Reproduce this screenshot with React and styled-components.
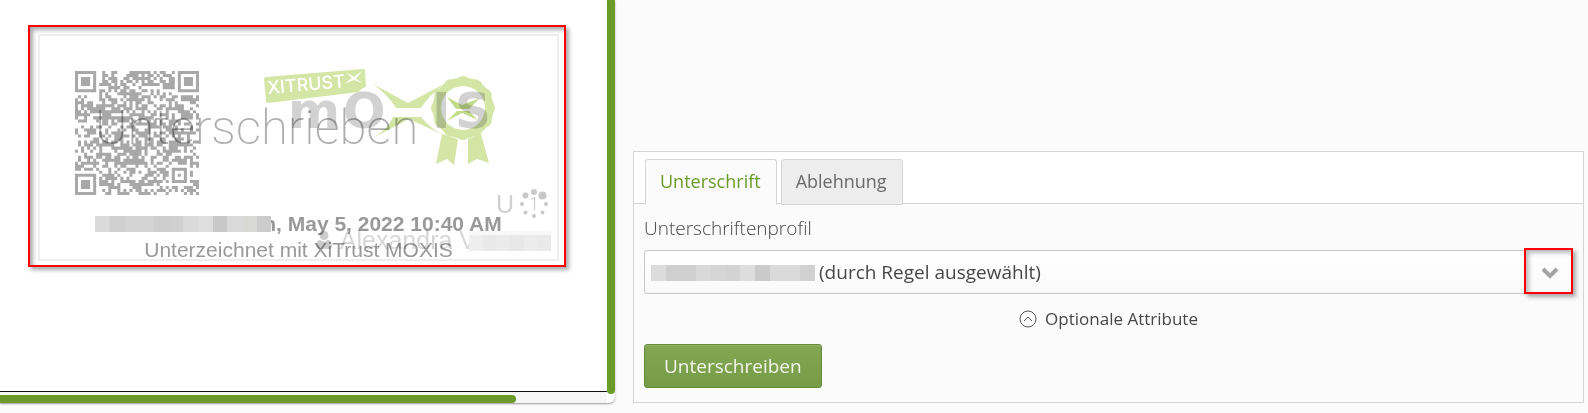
import { useState } from "react";
import styled, { createGlobalStyle } from "styled-components";

const QR_SIZE = 41;

// finder squares sit in three corners, the small alignment square in the fourth
const squares = [
  { x: 0, y: 0, size: 7 },
  { x: 34, y: 0, size: 7 },
  { x: 0, y: 34, size: 7 },
  { x: 32, y: 32, size: 5 },
];

const buildQr = () => {
  let seed = 20220505;
  let path = "";
  for (let y = 0; y < QR_SIZE; y++) {
    for (let x = 0; x < QR_SIZE; x++) {
      seed = (seed * 1103515245 + 12345) % 2147483648;
      const square = squares.find(
        (s) => x >= s.x - 1 && x <= s.x + s.size && y >= s.y - 1 && y <= s.y + s.size
      );
      let dark = seed / 2147483648 < 0.53;
      if (square) {
        const half = (square.size - 1) / 2;
        const ring = Math.max(Math.abs(x - square.x - half), Math.abs(y - square.y - half));
        dark = ring === half || ring <= half - 2;
      }
      if (dark) path += `M${x} ${y}h1v1h-1z`;
    }
  }
  return path;
};

const qrPath = buildQr();

const signerCells = ["#dadada", "#cfcfcf", "#d4d4d4", "#d4d4d4", "#cecece", "#d0d0d0", "#dadada", "#dedede", "#c8c8c8", "#dadada", "#d8d8d4", "#cccccc"];
const profileCells = ["#dcdcdc", "#cfcfcf", "#d0d0d0", "#d9d9d9", "#d5d5d5", "#d3d3d3", "#dddddd", "#cacaca", "#dadada", "#dadada", "#d1d1d1"];
const ownerCells = ["#eeeeee", "#e9e9e9", "#ebebeb", "#e8e8e8", "#ececec", "#eaeaea"];

const Mosaic = ({ cells, className }) => (
  <MosaicRow className={className} aria-hidden="true">
    {cells.map((color, i) => (
      <Cell key={i} $color={color} />
    ))}
  </MosaicRow>
);

const MoxisLogo = () => (
  <Logo viewBox="260 65 240 105" role="img" aria-label="XiTrust Moxis">
    <g fill="#d3e6a6">
      <path d="M266 77L363 69Q365 69 365 71L366 87Q361 88 359 92L268 103Q266 103 266 101L264 79Q264 77 266 77Z" />
      <path d="M373 84L408 103L446 83Q428 96 421 108H396Q388 95 373 84Z" />
      <path d="M373 138Q388 129 393 117H421Q431 130 450 138L409 119Z" />
      <path d="M442 134L436 164L447 159L454 165L458 139Z" />
      <path d="M468 139V164L477 159L489 163L481 134Z" />
      <circle cx="463" cy="108" r="26" fill="none" stroke="#d3e6a6" strokeWidth="9" />
      {Array.from({ length: 12 }, (_, i) => (
        <circle
          key={i}
          cx={463 + 25 * Math.cos((i * Math.PI) / 6)}
          cy={108 + 25 * Math.sin((i * Math.PI) / 6)}
          r="7"
        />
      ))}
      <circle cx="463" cy="108" r="22" fill="#fff" />
      <path fill="#c3dc8a" d="M447 97L462 105L480 98L469 109H456ZM447 121L457 111H469L478 120L462 113Z" />
    </g>
    <path fill="#fff" d="M346 72L354 77L362 71L356 79L363 83L354 80L344 84L352 78Z" />
    <LogoTag x="268" y="94" transform="rotate(-5 268 94)">XITRUST</LogoTag>
    <LogoName x="288 343 432 455" y="128">mOIS</LogoName>
  </Logo>
);

const Spinner = () => (
  <SpinnerIcon viewBox="0 0 30 30" aria-hidden="true">
    {[3, 4, 2, 2, 2, 2, 2, 3].map((r, i) => {
      const angle = ((i - 2) * Math.PI) / 4;
      return <circle key={i} cx={15 + 12 * Math.cos(angle)} cy={15 + 12 * Math.sin(angle)} r={r} />;
    })}
    <text x="15" y="21" textAnchor="middle">1</text>
  </SpinnerIcon>
);

const DocumentPreview = () => (
  <Viewer>
    <Sheet>
      <Highlight>
        <Stamp>
          <StampTop>
            <QrCode viewBox="0 0 41 41" role="img" aria-label="QR">
              <path d={qrPath} />
            </QrCode>
            <MoxisLogo />
          </StampTop>
          <StampText>
            <Signer>
              <SignerMosaic cells={signerCells} />
              <b>n, May 5, 2022 10:40 AM</b>
            </Signer>
            <div>Unterzeichnet mit XiTrust MOXIS</div>
          </StampText>
          <Watermark>Unterschrieben</Watermark>
          <Counter>
            U <Spinner />
          </Counter>
          <Owner>
            <svg width="16" height="18" viewBox="0 0 14 16" aria-hidden="true">
              <circle cx="7" cy="4" r="4" />
              <path d="M0 13Q0 8 4 8Q7 11 10 8Q14 8 14 13Q14 16 11 16H3Q0 16 0 13Z" />
            </svg>
            Alexandra V
            <OwnerMosaic cells={ownerCells} />
          </Owner>
        </Stamp>
      </Highlight>
    </Sheet>
    <HorizontalBar>
      <HorizontalThumb />
    </HorizontalBar>
    <VerticalBar>
      <VerticalThumb />
    </VerticalBar>
  </Viewer>
);

const SignPanel = () => {
  const [tab, setTab] = useState("sign");

  return (
    <Panel>
      <Tabs role="tablist">
        <Tab role="tab" aria-selected={tab === "sign"} $active={tab === "sign"} onClick={() => setTab("sign")}>
          Unterschrift
        </Tab>
        <Tab role="tab" aria-selected={tab === "reject"} $active={tab === "reject"} onClick={() => setTab("reject")}>
          Ablehnung
        </Tab>
      </Tabs>
      <Form onSubmit={(e) => e.preventDefault()}>
        <Label htmlFor="profile">Unterschriftenprofil</Label>
        <SelectBox>
          <Select id="profile">
            <option>(durch Regel ausgewählt)</option>
          </Select>
          <ProfileMosaic cells={profileCells} />
          <ArrowHighlight>
            <svg width="18" height="12" viewBox="0 0 18 12" aria-hidden="true">
              <path d="M2 2L9 9L16 2" fill="none" stroke="#a3a3a3" strokeWidth="4" />
            </svg>
          </ArrowHighlight>
        </SelectBox>
        <Optional type="button">
          <svg width="18" height="18" viewBox="0 0 18 18" fill="none" stroke="#555" aria-hidden="true">
            <circle cx="9" cy="9" r="8" />
            <path d="M5 11L9 7L13 11" />
          </svg>
          Optionale Attribute
        </Optional>
        <Submit type="submit">Unterschreiben</Submit>
      </Form>
    </Panel>
  );
};

const App = () => (
  <>
    <GlobalStyle />
    <Page>
      <DocumentPreview />
      <SignPanel />
    </Page>
  </>
);

const GlobalStyle = createGlobalStyle`
  * {
    box-sizing: border-box;
  }
  body {
    margin: 0;
    background: #fbfbfb;
    font-family: "Open Sans", sans-serif;
    color: #474747;
  }
`;

const Page = styled.main`
  display: grid;
  grid-template-columns: 615fr 951fr;
  column-gap: 18px;
  align-items: end;
  padding: 0 4px 10px 0;
`;

const Viewer = styled.section`
  display: grid;
  grid-template-columns: 1fr 8px;
  background: white;
  border-radius: 0 0 6px 0;
  box-shadow: 0 1px 2px #999;
`;

const Sheet = styled.div`
  padding: 25px 41px 124px 28px;
  border-bottom: 1px solid #111;
`;

const HorizontalBar = styled.div`
  grid-row: 2;
  padding-top: 3px;
  background: #f6f6f6;
`;

const HorizontalThumb = styled.div`
  width: 85%;
  height: 8px;
  border-radius: 0 4px 4px 0;
  background: #6a9a29;
`;

const VerticalBar = styled.div`
  grid-column: 2;
  grid-row: 1 / 3;
  padding-bottom: 9px;
`;

const VerticalThumb = styled.div`
  height: 100%;
  border-radius: 0 0 4px 4px;
  background: #6a9a29;
`;

const Highlight = styled.div`
  padding: 7px 5px 4px 8px;
  border: 2px solid #f00;
  box-shadow: 3px 3px 4px #aaa, inset 3px 3px 4px #aaa;
`;

const Stamp = styled.div`
  position: relative;
  height: 227px;
  padding: 35px 0 0 35px;
  border: 2px solid #eee;
`;

const StampTop = styled.div`
  display: flex;
  gap: 61px;
`;

const QrCode = styled.svg`
  width: 124px;
  height: 124px;
  fill: #a8a8a8;
`;

const Logo = styled.svg`
  width: 240px;
  height: 105px;
  margin-top: -6px;
`;

const LogoTag = styled.text`
  font: 500 18px Inter, sans-serif;
  fill: white;
`;

const LogoName = styled.text`
  font: bold 50px "DejaVu Sans", sans-serif;
  fill: #d2d2d2;
  mix-blend-mode: multiply;
`;

const StampText = styled.div`
  margin: 16px 0 0 -35px;
  font: 21px/26px "Liberation Sans", sans-serif;
  text-align: center;
  color: #999;
`;

const Signer = styled.div`
  display: flex;
  justify-content: center;
  align-items: center;
`;

const MosaicRow = styled.span`
  display: flex;
  height: 16px;
`;

const Cell = styled.span`
  flex: 1;
  background: ${({ $color }) => $color};
`;

const SignerMosaic = styled(Mosaic)`
  z-index: 1;
  width: 176px;
  margin-right: -8px;
`;

const Watermark = styled.div`
  position: absolute;
  top: 64px;
  left: 55px;
  font: 200 49px/56px Roboto, sans-serif;
  color: rgba(0, 0, 0, 0.32);
`;

const Counter = styled.div`
  position: absolute;
  top: 153px;
  right: 8px;
  display: flex;
  align-items: center;
  gap: 5px;
  font: 25px/30px "Liberation Sans", sans-serif;
  color: #d0d0d0;
`;

const SpinnerIcon = styled.svg`
  width: 30px;
  height: 30px;
  fill: #c8c8c8;

  text {
    font: 300 18px Roboto, sans-serif;
  }
`;

const Owner = styled.div`
  position: absolute;
  top: 189px;
  right: 6px;
  display: flex;
  align-items: center;
  gap: 8px;
  font: 25px/30px "Liberation Sans", sans-serif;
  color: rgba(0, 0, 0, 0.16);
  fill: rgba(0, 0, 0, 0.2);
`;

const OwnerMosaic = styled(Mosaic)`
  width: 82px;
  margin: 6px 0 0 -15px;
  box-shadow: 0 -4px #f8f8f8;
`;

const Panel = styled.section`
  border: 1px solid #d5d5d5;
`;

const Tabs = styled.div`
  display: flex;
  gap: 4px;
  height: 52px;
  padding: 7px 11px 0;
  border-bottom: 1px solid #d5d5d5;
  background: white;
`;

const Tab = styled.button`
  height: 46px;
  padding: 0 15px 2px 14px;
  border: 1px solid #d5d5d5;
  border-bottom-color: ${({ $active }) => ($active ? "#fbfbfb" : "#d5d5d5")};
  border-radius: 3px 3px 0 0;
  background: ${({ $active }) => ($active ? "#fbfbfb" : "#ededed")};
  font: 18px "Open Sans", sans-serif;
  color: ${({ $active }) => ($active ? "#6a9a29" : "#696969")};
`;

const Form = styled.form`
  display: flex;
  flex-direction: column;
  padding: 12px 10px 14px;
`;

const Label = styled.label`
  margin-bottom: 10px;
  font-size: 19px;
  font-weight: 300;
  line-height: 24px;
`;

const SelectBox = styled.div`
  position: relative;
`;

const Select = styled.select`
  display: block;
  width: 100%;
  height: 44px;
  padding: 0 50px 0 174px;
  appearance: none;
  border: 1px solid #c8c8c8;
  border-radius: 3px;
  background: linear-gradient(#fff, #fafafa);
  font: 19px "Open Sans", sans-serif;
  color: #474747;
`;

const ProfileMosaic = styled(Mosaic)`
  position: absolute;
  top: 15px;
  left: 7px;
  width: 164px;
`;

const ArrowHighlight = styled.span`
  position: absolute;
  top: -2px;
  right: 0;
  display: grid;
  place-items: center;
  width: 49px;
  height: 46px;
  padding: 4px 0 0 2px;
  border: 2px solid #f00;
  box-shadow: 3px 3px 4px #aaa, inset 3px 3px 4px #bbb;
  pointer-events: none;
`;

const Optional = styled.button`
  display: flex;
  align-items: center;
  align-self: center;
  gap: 8px;
  margin: 13px 0;
  padding: 0;
  border: none;
  background: none;
  font: 17px/24px "Open Sans", sans-serif;
  color: #474747;
`;

const Submit = styled.button`
  align-self: flex-start;
  height: 44px;
  padding: 0 19px;
  border: 1px solid #648a3a;
  border-radius: 3px;
  background: linear-gradient(#82a752, #769c48);
  box-shadow: inset 0 1px #94b56c;
  font: 19px "Open Sans", sans-serif;
  color: #f1f5ea;
`;

export default App;
